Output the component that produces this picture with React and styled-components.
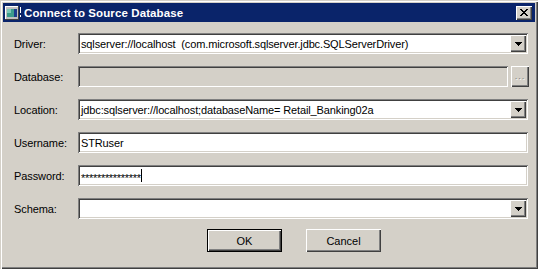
import React from 'react'
import styled, { createGlobalStyle, css } from 'styled-components'

const GlobalStyle = createGlobalStyle`
  html, body {
    margin: 0;
    padding: 0;
    background: #D4D0C8;
  }
  body {
    font-family: "Liberation Sans", Arial, sans-serif;
    font-size: 11px;
    color: #000;
  }
`

const sunken = css`
  box-shadow: inset 1px 1px #808080, inset -1px -1px #FFFFFF,
    inset 2px 2px #404040, inset -2px -2px #D4D0C8;
`

const raised = css`
  box-shadow: inset 1px 1px #FFFFFF, inset -1px -1px #404040,
    inset -2px -2px #808080;
`

const Window = styled.div`
  width: 538px;
  height: 269px;
  box-sizing: border-box;
  padding: 3px;
  background: #D4D0C8;
  box-shadow: inset 1px 1px #D4D0C8, inset 2px 2px #FFFFFF,
    inset -1px -1px #404040, inset -2px -2px #808080;
  display: flex;
  flex-direction: column;
`

const TitleBar = styled.div`
  height: 19px;
  background: #0A246A;
  display: flex;
  align-items: center;
  padding: 0 3px 0 2px;
  gap: 3px;
`

const Title = styled.div`
  flex: 1;
  color: #fff;
  font-weight: bold;
  font-size: 11.5px;
  letter-spacing: 0.1px;
`

const CloseBtn = styled.div`
  width: 16px;
  height: 14px;
  background: #D4D0C8;
  ${raised};
  display: flex;
  align-items: center;
  justify-content: center;
`

const Body = styled.div`
  display: grid;
  grid-template-columns: 64px 1fr;
  grid-auto-rows: 21px;
  row-gap: 12px;
  padding: 11px 7px 0 11px;
  align-items: center;
`

const Label = styled.div`
  font-size: 11px;
  color: #000;
  padding-top: 1px;
  letter-spacing: -0.1px;
`

const Field = styled.div`
  position: relative;
  height: 21px;
  box-sizing: border-box;
  background: ${({ disabled }) => (disabled ? '#D4D0C8' : '#FFFFFF')};
  ${sunken};
  display: flex;
  align-items: center;
  padding: 0 3px;
  flex: 1;
  white-space: pre;
  font-size: 11px;
  letter-spacing: -0.13px;
`

const Dots = styled.span`
  font-size: 11px;
  letter-spacing: -0.3px;
  position: relative;
  top: 2px;
`

const Caret = styled.span`
  display: inline-block;
  width: 1px;
  height: 13px;
  background: #000;
`

const DropBtn = styled.div`
  position: absolute;
  top: 2px;
  right: 2px;
  bottom: 2px;
  width: 16px;
  background: #D4D0C8;
  ${raised};
  display: flex;
  align-items: center;
  justify-content: center;
`

const Row = styled.div`
  display: flex;
  gap: 3px;
  height: 21px;
`

const SmallBtn = styled.div`
  width: 18px;
  height: 21px;
  margin-right: -1px;
  background: #D4D0C8;
  ${raised};
  display: flex;
  align-items: flex-end;
  justify-content: center;
  padding-bottom: 6px;
  box-sizing: border-box;
  color: #808080;
  font-size: 9px;
  letter-spacing: 1px;
  text-shadow: 1px 1px #fff;
`

const Buttons = styled.div`
  display: flex;
  gap: 24px;
  padding: 10px 0 0 204px;
`

const Button = styled.div`
  width: 75px;
  height: 23px;
  box-sizing: border-box;
  background: #D4D0C8;
  display: flex;
  align-items: center;
  justify-content: center;
  font-size: 11px;
  ${({ primary }) =>
    primary
      ? css`
          box-shadow: inset 0 0 0 1px #000, inset 2px 2px #FFFFFF,
            inset -2px -2px #404040, inset -3px -3px #808080;
        `
      : raised};
`

function Arrow() {
  return (
    <svg width="7" height="4" viewBox="0 0 7 4" shapeRendering="crispEdges">
      <path d="M0 0h7v1H0zM1 1h5v1H1zM2 2h3v1H2zM3 3h1v1H3z" fill="#000" />
    </svg>
  )
}

function Combo({ value }) {
  return (
    <Field>
      {value}
      <DropBtn>
        <Arrow />
      </DropBtn>
    </Field>
  )
}

function AppIcon() {
  return (
    <svg width="16" height="14" viewBox="0 0 16 14" shapeRendering="crispEdges">
      <rect x="0" y="0" width="14" height="14" fill="#C0C0C0" />
      <rect x="0" y="0" width="14" height="1" fill="#fff" />
      <rect x="0" y="0" width="1" height="14" fill="#fff" />
      <rect x="13" y="0" width="1" height="14" fill="#404040" />
      <rect x="0" y="13" width="14" height="1" fill="#404040" />
      <rect x="2" y="3" width="7" height="8" fill="#3C9C8C" />
      <rect x="2" y="3" width="4" height="4" fill="#7CC8B8" />
      <rect x="9" y="3" width="3" height="8" fill="#1C3C8C" />
      <rect x="15" y="1" width="1" height="6" fill="#fff" />
      <rect x="15" y="9" width="1" height="2" fill="#fff" />
    </svg>
  )
}

function CloseIcon() {
  return (
    <svg width="8" height="7" viewBox="0 0 8 7" shapeRendering="crispEdges">
      <path
        d="M0 0h2v1H0zM6 0h2v1H6zM1 1h2v1H1zM5 1h2v1H5zM2 2h4v1H2zM3 3h2v1H3zM2 4h4v1H2zM1 5h2v1H1zM5 5h2v1H5zM0 6h2v1H0zM6 6h2v1H6z"
        fill="#000"
      />
    </svg>
  )
}

export default function App() {
  return (
    <>
      <GlobalStyle />
      <Window>
        <TitleBar>
          <AppIcon />
          <Title>Connect to Source Database</Title>
          <CloseBtn>
            <CloseIcon />
          </CloseBtn>
        </TitleBar>
        <Body>
          <Label>Driver:</Label>
          <Combo value="sqlserver://localhost  (com.microsoft.sqlserver.jdbc.SQLServerDriver)" />

          <Label>Database:</Label>
          <Row>
            <Field disabled />
            <SmallBtn>...</SmallBtn>
          </Row>

          <Label>Location:</Label>
          <Combo value="jdbc:sqlserver://localhost;databaseName= Retail_Banking02a" />

          <Label>Username:</Label>
          <Field>STRuser</Field>

          <Label>Password:</Label>
          <Field>
            <Dots>***************</Dots>
            <Caret />
          </Field>

          <Label>Schema:</Label>
          <Combo value="" />
        </Body>
        <Buttons>
          <Button primary>OK</Button>
          <Button>Cancel</Button>
        </Buttons>
      </Window>
    </>
  )
}
